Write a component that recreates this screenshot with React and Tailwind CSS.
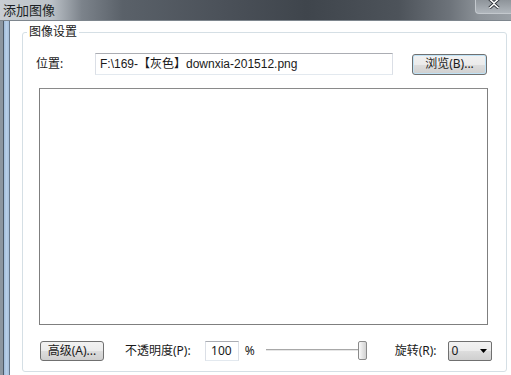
export default function App() {
  const font = { fontFamily: '"Noto Sans", "Noto Sans CJK SC", sans-serif' };
  const btn =
    "flex items-center justify-center rounded-[3px] border border-[#707070] bg-[linear-gradient(to_bottom,#f2f2f2_0%,#ebebeb_50%,#dddddd_51%,#cfcfcf_100%)] text-[12px] text-[#1a1a1a] leading-none";
  return (
    <div
      className="w-[511px] h-[375px] overflow-hidden bg-white flex flex-col text-[12px] text-[#1a1a1a]"
      style={font}
    >
      {/* title bar */}
      <div className="h-[21px] shrink-0 flex items-start justify-between bg-[linear-gradient(to_right,#c8cdd2_0%,#bcc2c8_10%,#7c838b_16%,#5a6169_24%,#4a5058_45%,#3f454c_60%,#4d535a_78%,#6d737a_88%,#8d9399_94%,#9aa0a6_100%)] border-b border-[#7e868e]">
        <div className="pl-[3px] pt-[2px] text-[13px] leading-[16px] text-[#1b1f24]">添加图像</div>
        <div className="w-[36px] h-[14px] rounded-bl-[4px] border-l border-b border-[#c3c8cd] bg-[linear-gradient(to_bottom,#8e949a,#b0b6bc)] flex items-start justify-center">
          <svg width="12" height="10" viewBox="0 0 12 10" className="mt-[-1px]">
            <path d="M1.5 0 L6 4 L10.5 0 M1.5 9 L6 5 L10.5 9" stroke="#2a2f35" strokeWidth="3.2" fill="none" />
            <path d="M1.5 0 L6 4 L10.5 0 M1.5 9 L6 5 L10.5 9" stroke="#ffffff" strokeWidth="1.6" fill="none" />
          </svg>
        </div>
      </div>
      {/* body */}
      <div className="flex flex-1 min-h-0">
        {/* left frame */}
        <div className="flex shrink-0">
          <div className="w-[3px] bg-[#8c96a0]" />
          <div className="w-[1px] bg-[#4c5a68]" />
          <div className="w-[5px] bg-[linear-gradient(to_right,#9fbbd9,#b8cfe8,#a6c0dc)]" />
          <div className="w-[1px] bg-[#66778a]" />
        </div>
        {/* client */}
        <div className="flex-1 bg-white">
          <div className="relative mt-[11px] ml-[12px] w-[485px] h-[340px] rounded-[3px] border border-[#d5dfe5]">
            <span className="absolute left-[4px] top-[-8px] bg-white px-[2px] leading-[14px]">图像设置</span>
            {/* row 1 */}
            <div className="flex items-center pt-[20px] pl-[13px]">
              <span className="w-[59px] leading-[14px]">位置:</span>
              <div className="w-[298px] h-[22px] border border-[#abadb3] border-b-[#e3e9ef] border-x-[#dbdfe6] flex items-center pl-[4px] bg-white">
                <span
                  className="leading-none whitespace-nowrap"
                  style={{ fontFamily: '"Liberation Sans", "Noto Sans CJK SC", sans-serif' }}
                >
                  F:\169-【灰色】downxia-201512.png
                </span>
              </div>
              <div className={`${btn} ml-[19px] w-[75px] h-[21px] border-[#3c7fb1] shadow-[inset_0_0_0_1px_#bfe3f7]`}>
                浏览(B)...
              </div>
            </div>
            {/* image preview */}
            <div className="ml-[16px] mt-[13px] w-[449px] h-[237px] border border-[#7f7f7f] border-t-[#8a8a8a] bg-white" />
            {/* bottom row */}
            <div className="flex items-center mt-[15px] pl-[17px] h-[21px]">
              <div className={`${btn} w-[64px] h-[20px]`}>高级(A)...</div>
              <span className="ml-[21px] leading-none">不透明度(P):</span>
              <div className="ml-[14px] w-[34px] h-[20px] border border-[#abadb3] border-b-[#e3e9ef] border-x-[#dbdfe6] flex items-center justify-end pr-[6px] bg-white">
                <span className="leading-none">100</span>
              </div>
              <span className="ml-[6px] leading-none">%</span>
              <div className="ml-[11px] flex items-center w-[102px] h-[20px]">
                <div className="w-[93px] h-[3px] border-t border-[#a8a8a8] border-b border-b-[#ffffff] bg-[#e6e6e6]" />
                <div className="ml-[-1px] w-[9px] h-[19px] rounded-[2px] border border-[#8a8a8a] bg-[linear-gradient(to_right,#fafafa,#e4e4e4,#d2d2d2)]" />
              </div>
              <span className="ml-[27px] leading-none">旋转(R):</span>
              <div className="ml-[11px] w-[44px] h-[20px] rounded-[2px] border border-[#707070] bg-[linear-gradient(to_bottom,#f2f2f2_0%,#ebebeb_50%,#dddddd_51%,#cfcfcf_100%)] flex items-center justify-between pl-[3px] pr-[4px]">
                <span className="leading-none">0</span>
                <svg width="7" height="4" viewBox="0 0 7 4">
                  <path d="M0 0 H7 L3.5 4 Z" fill="#000" />
                </svg>
              </div>
            </div>
          </div>
        </div>
      </div>
    </div>
  );
}
